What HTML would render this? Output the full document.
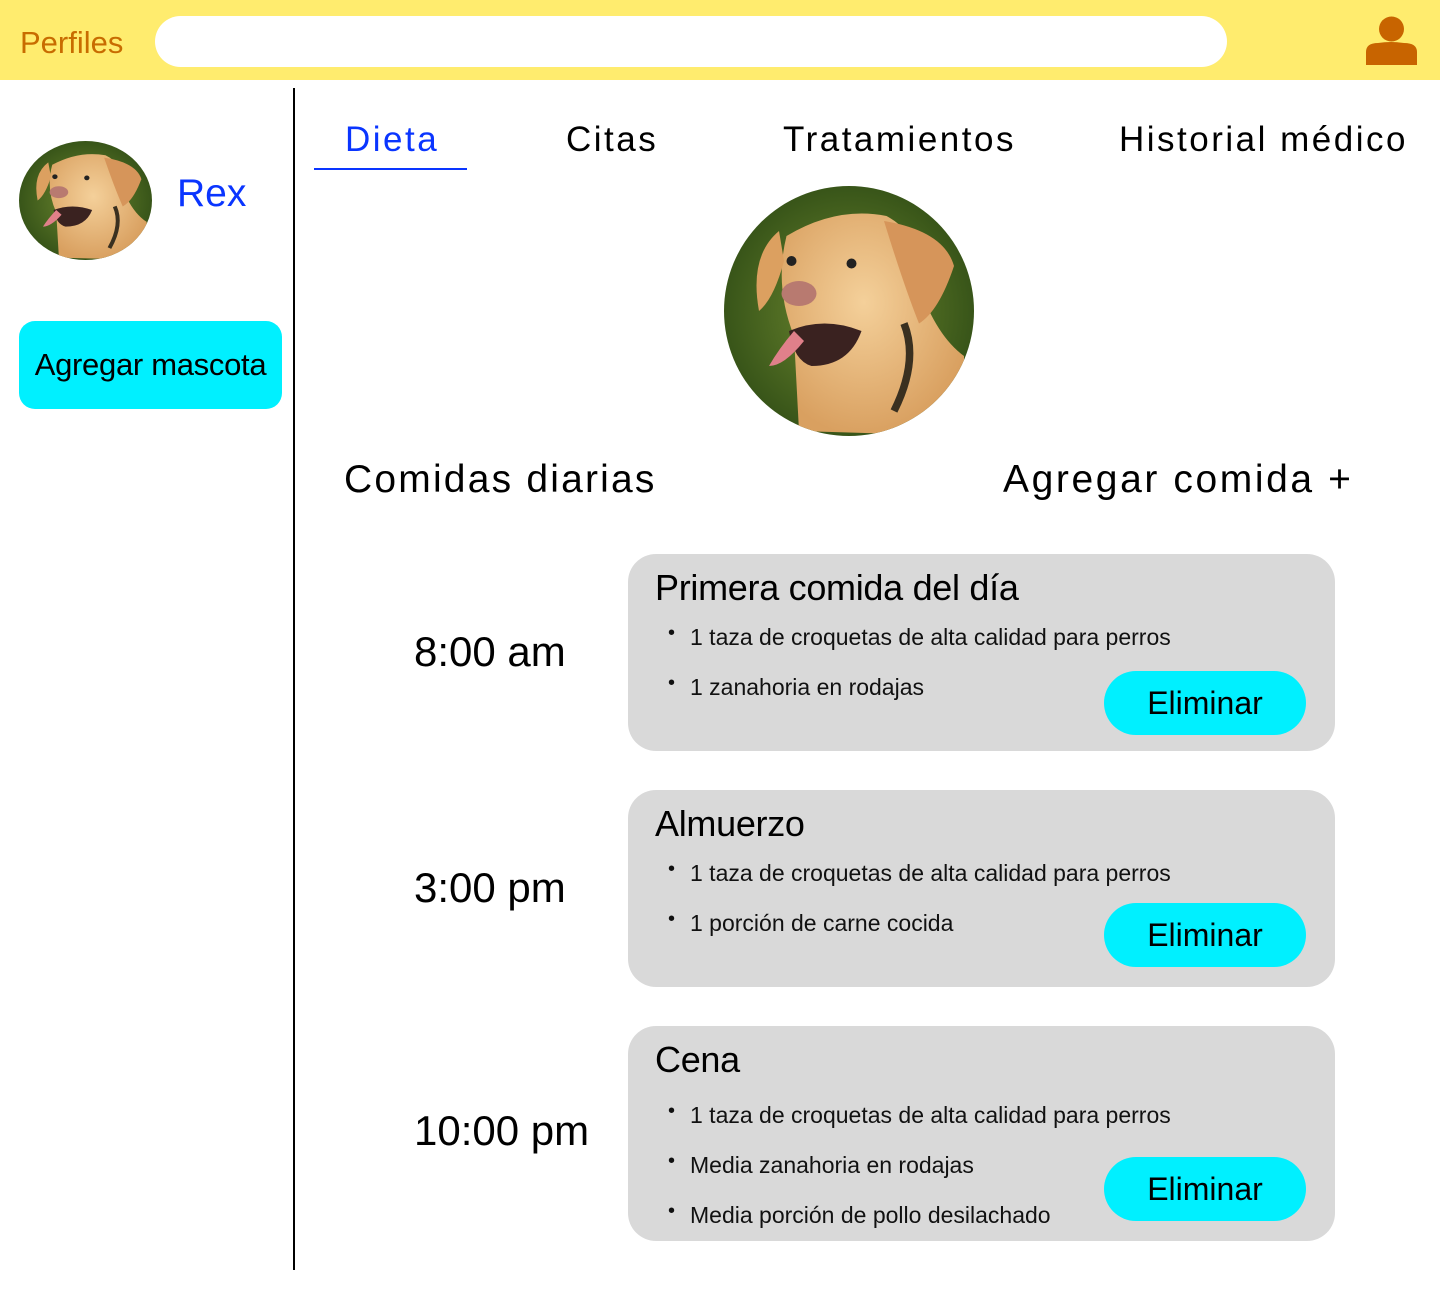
<!DOCTYPE html>
<html><head><meta charset="utf-8"><style>
*{margin:0;padding:0;box-sizing:border-box}
body{width:1440px;height:1305px;background:#fff;font-family:"Liberation Sans",sans-serif;position:relative;overflow:hidden}
.a{position:absolute}
.hdr{left:0;top:0;width:1440px;height:80px;background:#ffec6e}
.card{background:#d9d9d9;border-radius:28px;left:628px;width:707px}
.card h3{position:absolute;left:27px;top:13px;font-weight:normal;font-size:36px;color:#000;letter-spacing:-0.3px}
.it{position:absolute;left:40px;font-size:23px;color:#111}
.it:before{content:"•";position:absolute;left:0;top:-2px;font-size:20px}
.it span{padding-left:22px}
.btn{position:absolute;left:476px;width:202px;height:64px;background:#00f0ff;border-radius:32px;font-size:32px;text-align:center;line-height:64px;color:#000}
.time{font-size:42px;color:#000;left:414px}
.tab{font-size:35px;top:120px;color:#000;letter-spacing:2.5px}
</style></head><body>
<svg width="0" height="0" style="position:absolute"><defs>
<radialGradient id="bg" cx="50%" cy="50%" r="60%"><stop offset="0" stop-color="#6f8a30"/><stop offset="1" stop-color="#2d4a14"/></radialGradient>
<radialGradient id="fur" cx="45%" cy="40%" r="60%"><stop offset="0" stop-color="#f4d09a"/><stop offset="1" stop-color="#d9a060"/></radialGradient>
<g id="dogg">
<rect width="100" height="100" fill="url(#bg)"/>
<path d="M30 98 L28 60 Q20 40 25 20 Q45 8 65 12 Q80 20 78 40 Q85 60 96 68 L96 100 Z" fill="url(#fur)"/>
<path d="M22 18 Q10 28 14 50 Q20 45 24 30 Z" fill="#dca060"/>
<path d="M64 14 Q88 18 92 32 Q86 50 78 55 Q72 40 64 14 Z" fill="#d6955a"/>
<circle cx="27" cy="30" r="2" fill="#222"/><circle cx="51" cy="31" r="2" fill="#222"/>
<ellipse cx="30" cy="43" rx="7" ry="5" fill="#b87a70"/>
<path d="M26 58 Q40 52 55 58 Q50 72 35 72 Q28 70 26 58 Z" fill="#3a2220"/>
<path d="M28 58 Q22 65 18 72 Q24 72 32 62 Z" fill="#e0808a"/>
<path d="M72 55 Q78 70 68 90" stroke="#3a3020" stroke-width="3" fill="none"/>
</g></defs></svg>

<div class="a hdr"></div>
<div class="a" style="left:20px;top:25px;font-size:31px;color:#c86c00">Perfiles</div>
<div class="a" style="left:155px;top:16px;width:1072px;height:51px;background:#fff;border-radius:26px"></div>
<svg class="a" style="left:1366px;top:16px" width="51" height="50" viewBox="0 0 51 50"><circle cx="25.5" cy="13" r="12.5" fill="#c86400"/><path d="M0 49 L0 36 Q0 27 12 27 Q25 25 38 27 Q51 27 51 36 L51 49 Z" fill="#c86400"/></svg>

<div class="a" style="left:293px;top:88px;width:1.5px;height:1182px;background:#000"></div>

<svg class="a" style="left:19px;top:141px;border-radius:50%" width="133" height="119" viewBox="0 0 100 100" preserveAspectRatio="none"><use href="#dogg"/></svg>
<div class="a" style="left:177px;top:172px;font-size:39px;color:#0a35ff">Rex</div>
<div class="a" style="left:19px;top:321px;width:263px;height:88px;background:#00f0ff;border-radius:16px;font-size:31px;line-height:88px;text-align:center;letter-spacing:-0.3px">Agregar mascota</div>

<div class="a tab" style="left:345px;color:#0a35ff">Dieta</div>
<div class="a" style="left:314px;top:168px;width:153px;height:1.5px;background:#0a35ff"></div>
<div class="a tab" style="left:566px">Citas</div>
<div class="a tab" style="left:783px">Tratamientos</div>
<div class="a tab" style="left:1119px">Historial médico</div>

<svg class="a" style="left:724px;top:186px;border-radius:50%" width="250" height="250" viewBox="0 0 100 100"><use href="#dogg"/></svg>

<div class="a" style="left:344px;top:458px;font-size:39px;letter-spacing:2.2px">Comidas diarias</div>
<div class="a" style="left:1003px;top:458px;font-size:39px;letter-spacing:2.6px">Agregar comida +</div>

<div class="a time" style="top:628px">8:00 am</div>
<div class="a card" style="top:554px;height:197px"><h3>Primera comida del día</h3>
<div class="it" style="top:70px"><span>1 taza de croquetas de alta calidad para perros</span></div>
<div class="it" style="top:120px"><span>1 zanahoria en rodajas</span></div>
<div class="btn" style="top:117px">Eliminar</div></div>

<div class="a time" style="top:864px">3:00 pm</div>
<div class="a card" style="top:790px;height:197px"><h3>Almuerzo</h3>
<div class="it" style="top:70px"><span>1 taza de croquetas de alta calidad para perros</span></div>
<div class="it" style="top:120px"><span>1 porción de carne cocida</span></div>
<div class="btn" style="top:113px">Eliminar</div></div>

<div class="a time" style="top:1107px">10:00 pm</div>
<div class="a card" style="top:1026px;height:215px"><h3>Cena</h3>
<div class="it" style="top:76px"><span>1 taza de croquetas de alta calidad para perros</span></div>
<div class="it" style="top:126px"><span>Media zanahoria en rodajas</span></div>
<div class="it" style="top:176px"><span>Media porción de pollo desilachado</span></div>
<div class="btn" style="top:131px">Eliminar</div></div>
</body></html>
